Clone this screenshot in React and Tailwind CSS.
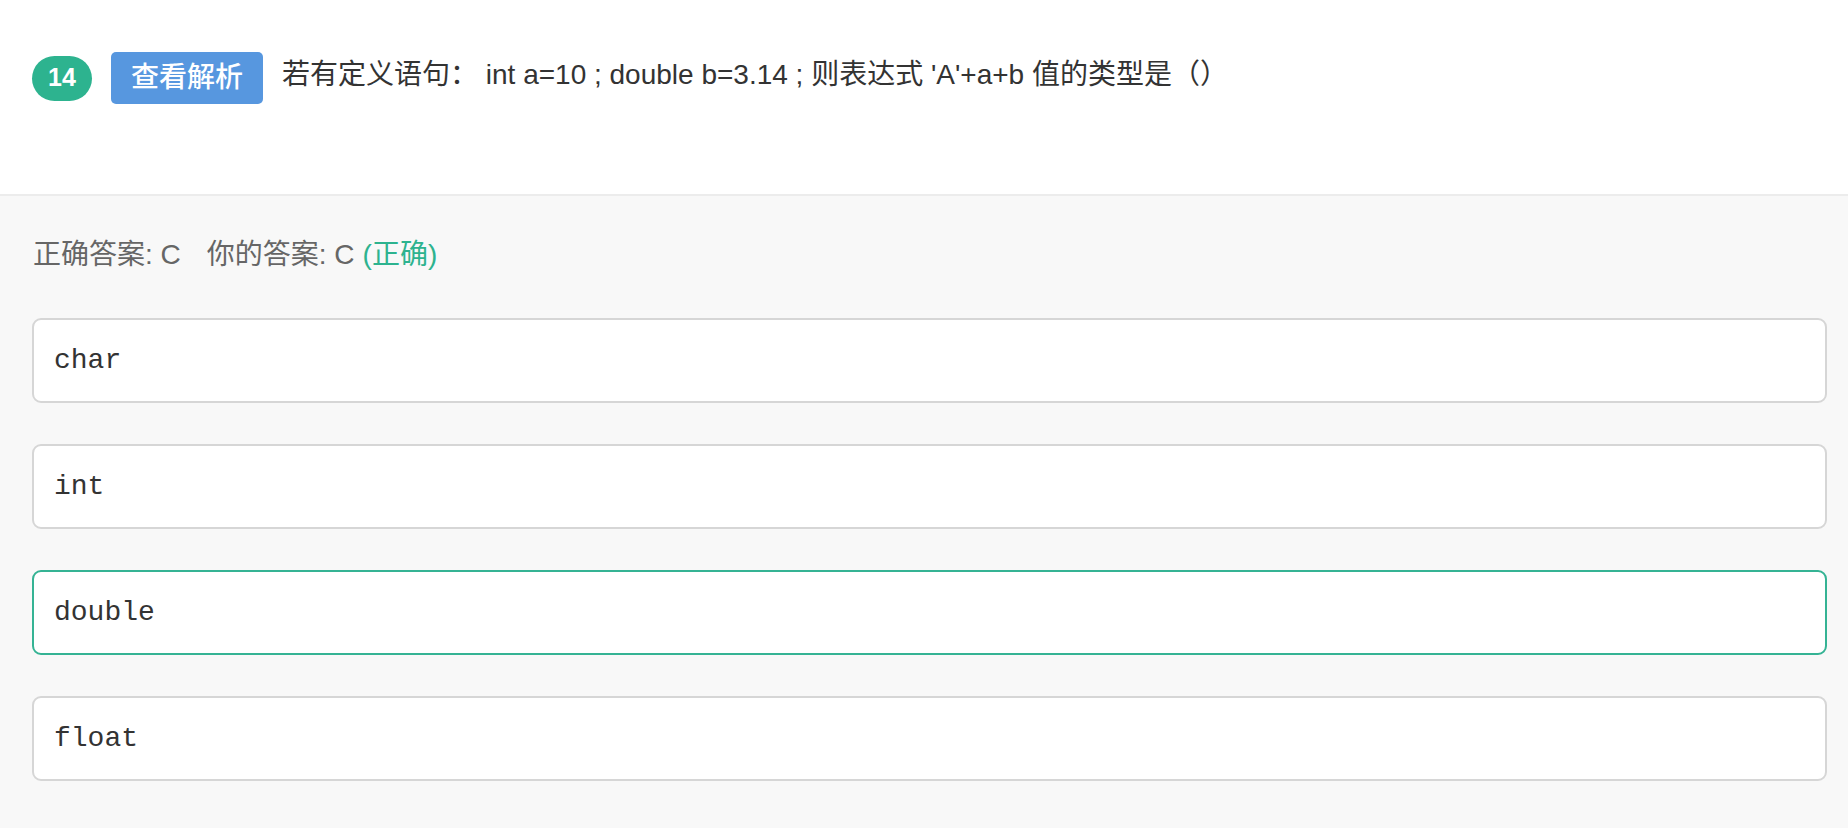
import React from "react";

export default function App() {
  const options = [
    { t: "char", correct: false },
    { t: "int", correct: false },
    { t: "double", correct: true },
    { t: "float", correct: false },
  ];
  return (
    <div className="w-[1848px] h-[828px] bg-[#f8f8f8] overflow-hidden font-['Liberation_Sans','Noto_Sans_CJK_SC',sans-serif]">
      <div className="h-[196px] bg-white border-b-2 border-[#ececec] pt-[52px] pl-8">
        <div className="flex items-center h-[52px]">
          <div className="w-[60px] h-[45px] rounded-full bg-[#2db38f] text-white flex items-center justify-center text-[25px] font-bold">
            14
          </div>
          <div className="ml-[19px] w-[152px] h-[52px] rounded-[5px] bg-[#5797df] text-white flex items-center justify-center text-[28px] font-medium">
            查看解析
          </div>
          <div className="ml-[19px] text-[28px] text-[#333] leading-none pb-[6px] whitespace-nowrap">
            若有定义语句：&nbsp;int a=10 ; double b=3.14 ; 则表达式 'A'+a+b 值的类型是（）
          </div>
        </div>
      </div>
      <div className="pl-8 pr-[21px] pt-[42px]">
        <div className="h-[34px] flex items-center text-[28px] text-[#666] ml-[1px] whitespace-nowrap">
          <span>正确答案: C</span>
          <span className="ml-[26px]">你的答案: C</span>
          <span className="ml-[8px] text-[#2db38f]">(正确)</span>
        </div>
        <div className="mt-[46px] flex flex-col gap-[41px]">
          {options.map((o) => (
            <div
              key={o.t}
              className={
                "h-[85px] rounded-[9px] bg-white flex items-center pl-[20px] text-[28px] text-[#333] font-['Liberation_Mono','Courier_New',monospace] " +
                (o.correct ? "border-2 border-[#35b394]" : "border-2 border-[#d6d6d6]")
              }
            >
              {o.t}
            </div>
          ))}
        </div>
      </div>
    </div>
  );
}
